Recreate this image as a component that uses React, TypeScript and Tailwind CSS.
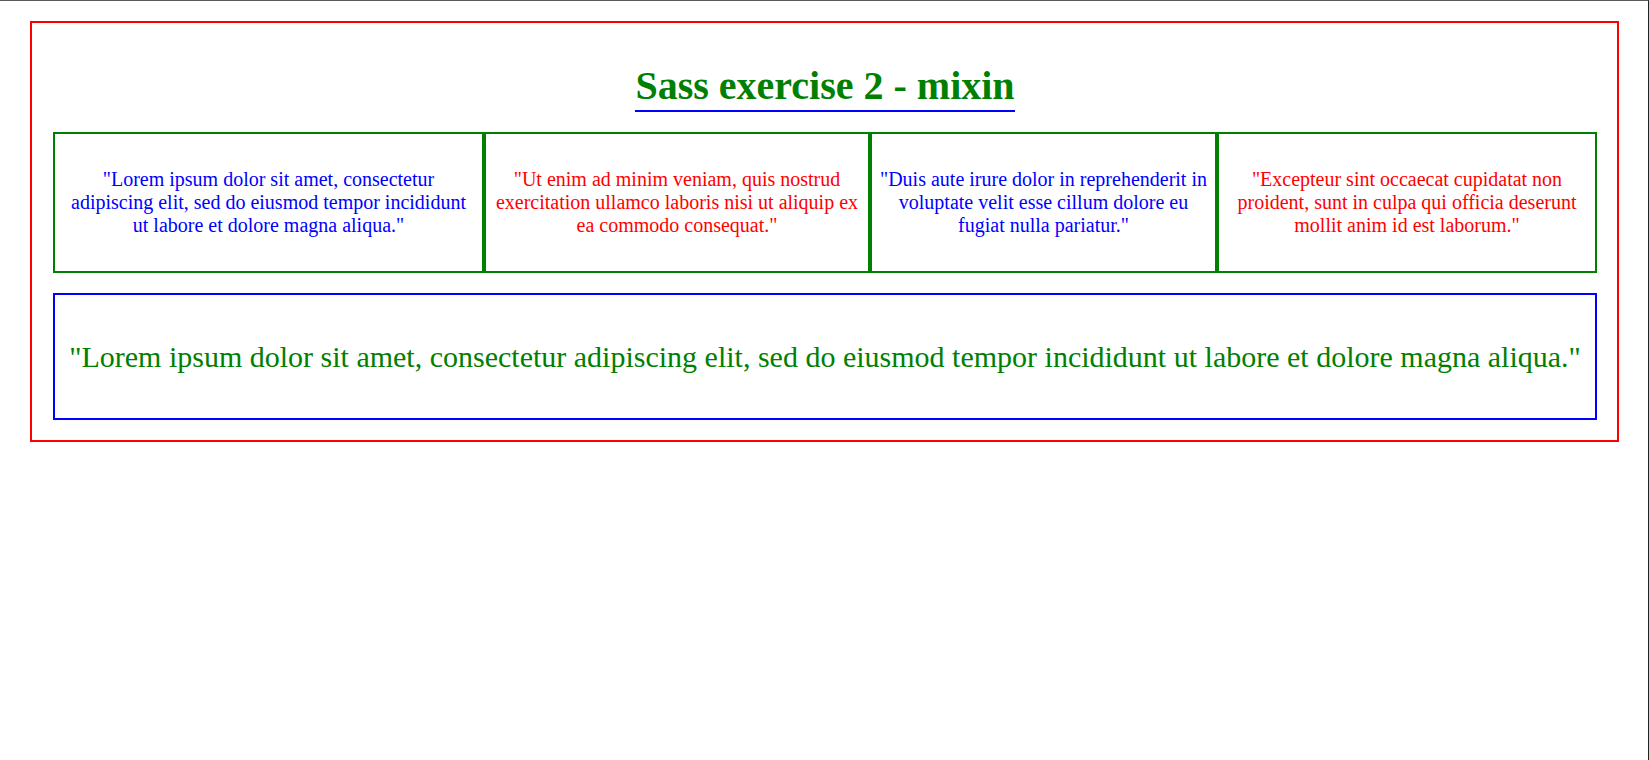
import React from 'react';

const boxes = [
  {
    width: 'w-[431px]',
    color: 'text-[#0000ff]',
    text: '"Lorem ipsum dolor sit amet, consectetur adipiscing elit, sed do eiusmod tempor incididunt ut labore et dolore magna aliqua."',
  },
  {
    width: 'w-[386px]',
    color: 'text-[#ff0000]',
    text: '"Ut enim ad minim veniam, quis nostrud exercitation ullamco laboris nisi ut aliquip ex ea commodo consequat."',
  },
  {
    width: 'w-[347px]',
    color: 'text-[#0000ff]',
    text: '"Duis aute irure dolor in reprehenderit in voluptate velit esse cillum dolore eu fugiat nulla pariatur."',
  },
  {
    width: 'w-[380px]',
    color: 'text-[#ff0000]',
    text: '"Excepteur sint occaecat cupidatat non proident, sunt in culpa qui officia deserunt mollit anim id est laborum."',
  },
];

export default function App() {
  return (
    <div className="h-screen bg-white border-t border-t-[#5a5a5a] border-r border-r-[#222] font-['Liberation_Serif',serif]">
      {/* outer red wrapper */}
      <div className="ml-[30px] mt-[20px] w-[1589px] border-2 border-[#ff0000] pl-[21px] pr-[20px] pt-[39px] pb-[20px]">
        <div className="text-center">
          <h1 className="inline-block border-b-2 border-[#0000ff] text-[40px] leading-[48px] font-bold text-[#008000]">
            Sass exercise 2 - mixin
          </h1>
        </div>

        {/* mixin boxes */}
        <div className="mt-[20px] flex">
          {boxes.map((b, i) => (
            <div
              key={i}
              className={`${b.width} h-[141px] shrink-0 border-2 border-[#008000] px-[7px] flex items-center justify-center text-center text-[20px] leading-[23px] ${b.color}`}
            >
              <p>{b.text}</p>
            </div>
          ))}
        </div>

        <div className="mt-[20px] h-[127px] border-2 border-[#0000ff] flex items-center justify-center text-center text-[30px] leading-[34px] text-[#008000]">
          <p>"Lorem ipsum dolor sit amet, consectetur adipiscing elit, sed do eiusmod tempor incididunt ut labore et dolore magna aliqua."</p>
        </div>
      </div>
    </div>
  );
}
